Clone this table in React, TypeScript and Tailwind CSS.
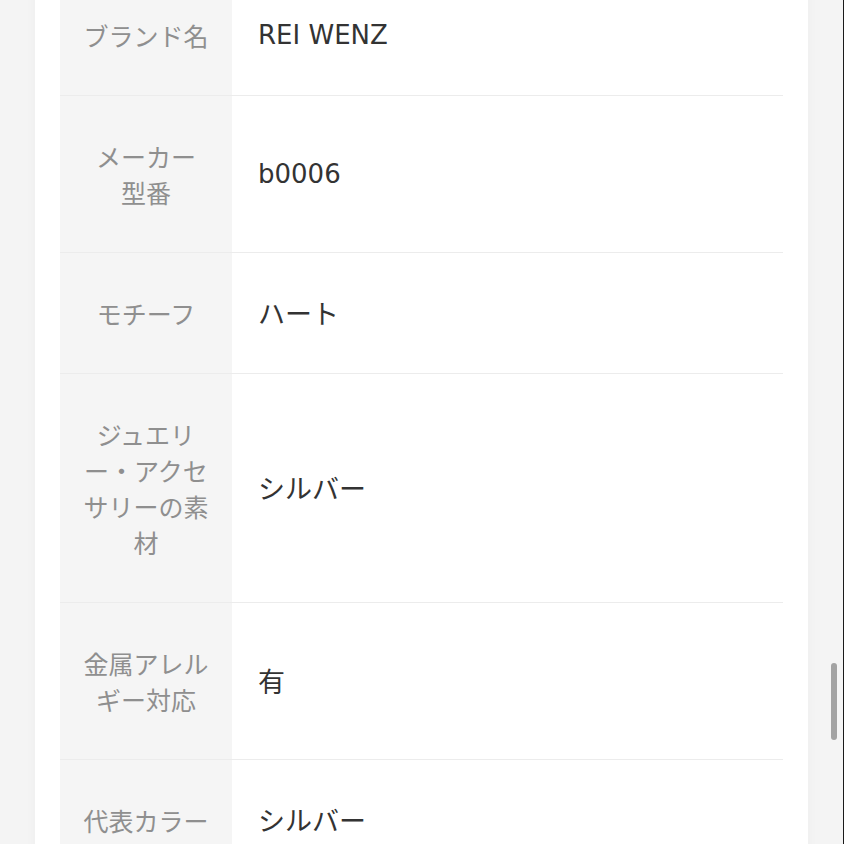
import React from 'react';

// --- DATA ---
interface SpecRow {
  label: string[];
  value: string;
  latin?: boolean;
}

const rows: SpecRow[] = [
  { label: ['ブランド名'], value: 'REI WENZ', latin: true },
  { label: ['メーカー', '型番'], value: 'b0006', latin: true },
  { label: ['モチーフ'], value: 'ハート' },
  { label: ['ジュエリ', 'ー・アクセ', 'サリーの素', '材'], value: 'シルバー' },
  { label: ['金属アレル', 'ギー対応'], value: '有' },
  { label: ['代表カラー'], value: 'シルバー' },
];

export default function App() {
  return (
    <div className="relative h-[844px] w-[844px] overflow-hidden bg-[#f4f4f4] border-r border-[#1a1a1a]">
      {/* fake scrollbar */}
      <div className="absolute left-[831px] top-[663px] h-[77px] w-[6px] rounded-full bg-[#a3a3a3]" />

      <div className="ml-[35px] w-[773px] min-h-[900px] bg-white px-[25px] shadow-[0_0_12px_rgba(0,0,0,0.03)]">
        <div className="-mt-[25px] font-['Noto_Sans_CJK_JP',sans-serif]">
          {rows.map((row, i) => (
            <div key={i} className="grid grid-cols-[172px_1fr] border-b border-[#ececec]">
              <div className="bg-[#f5f5f5] py-[42px] text-center text-[25px] leading-[36px] text-[#8f8f8f]">
                {row.label.map((line, j) => (
                  <div key={j}>{line}</div>
                ))}
              </div>
              <div
                className={
                  row.latin
                    ? "flex items-center pl-[26px] text-[26px] text-[#333333] font-['DejaVu_Sans',sans-serif]"
                    : "flex items-center pl-[26px] text-[27px] text-[#333333] font-['Noto_Sans_CJK_JP',sans-serif]"
                }
              >
                {row.value}
              </div>
            </div>
          ))}
        </div>
      </div>
    </div>
  );
}
